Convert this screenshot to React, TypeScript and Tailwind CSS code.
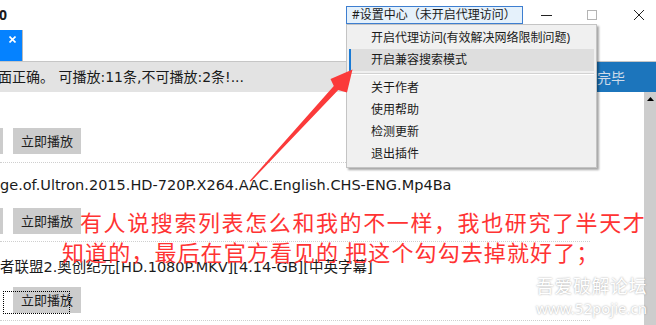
import React from "react";

const menuBottom = ["关于作者", "使用帮助", "检测更新", "退出插件"];

const PlayButton = () => (
  <button className="w-[68px] h-[26px] bg-[#cccccc] text-[13px] text-[#1e1e1e] leading-none">
    立即播放
  </button>
);

const ButtonRow = ({ stub = true, focused = false }: { stub?: boolean; focused?: boolean }) => (
  <div className="flex items-center h-[26px]">
    <div className={stub ? "w-[3px] h-[26px] bg-[#cccccc]" : "w-[3px] h-[26px]"} />
    <div className="relative ml-[10px]">
      <PlayButton />
      {focused && (
        <div className="absolute -left-[10px] top-[4px] w-[67px] h-[23px] border border-dotted border-black" />
      )}
    </div>
  </div>
);

const App = () => {
  return (
    <div className="relative w-[656px] h-[325px] overflow-hidden bg-white text-[#1a1a1a] font-['Noto_Sans','Noto_Sans_CJK_SC',sans-serif]">
      {/* title bar */}
      <div className="flex items-center h-[30px] pr-[12px]">
        <span className="-ml-[1px] text-[14px] font-bold leading-none">0</span>
        <div className="ml-auto w-[177px] h-[18px] border border-[#3d7ed0] bg-[#e5f1fb] flex items-center pl-[5px] text-[12px] leading-none">
          #设置中心（未开启代理访问）
        </div>
        <svg className="ml-[18px]" width="11" height="11" viewBox="0 0 11 11">
          <line x1="0" y1="5.5" x2="11" y2="5.5" stroke="#222" strokeWidth="1" />
        </svg>
        <svg className="ml-[35px]" width="10" height="10" viewBox="0 0 10 10">
          <rect x="0.5" y="0.5" width="9" height="9" fill="none" stroke="#b4b4b4" strokeWidth="1" />
        </svg>
        <svg className="ml-[37px]" width="10" height="10" viewBox="0 0 10 10">
          <path d="M0 0 L10 10 M10 0 L0 10" stroke="#222" strokeWidth="1" />
        </svg>
      </div>

      {/* tab strip */}
      <div className="h-[32px] border-b border-[#c6c6c6]">
        <div className="w-[23px] h-full bg-[#0582ff] border-r border-[#b9b9b9] flex justify-center pt-[6px] pl-[3px]">
          <svg width="7" height="7" viewBox="0 0 7 7">
            <path d="M0.5 0.5 L6.5 6.5 M6.5 0.5 L0.5 6.5" stroke="#fff" strokeWidth="1.6" />
          </svg>
        </div>
      </div>

      {/* status bar */}
      <div className="flex items-center h-[30px] bg-[#e3e3e3]">
        <span className="-ml-[2px] text-[14px] whitespace-nowrap font-['DejaVu_Sans','Noto_Sans_CJK_SC',sans-serif]">
          面正确。 可播放:11条,不可播放:2条!...
        </span>
        <div className="ml-auto w-[108px] h-full bg-[#1c75bc] flex items-center pl-[21px] text-[14px] text-[#cfdcea] whitespace-nowrap">
          加载完毕
        </div>
      </div>

      {/* list + scrollbar */}
      <div className="flex h-[233px]">
        <div className="flex-1 overflow-hidden">
          <div className="w-[590px] font-['DejaVu_Sans','Noto_Sans_CJK_SC',sans-serif]">
            <div className="pt-[36px] pb-[8px] border-b border-dotted border-[#cfcfcf]">
              <ButtonRow />
            </div>
            <div className="pt-[12px] pb-[7px] border-b border-dotted border-[#cfcfcf]">
              <div className="h-[20px] leading-[20px] text-[14.5px] whitespace-nowrap">
                ge.of.Ultron.2015.HD-720P.X264.AAC.English.CHS-ENG.Mp4Ba
              </div>
              <div className="mt-[13px]">
                <ButtonRow />
              </div>
            </div>
            <div className="pt-[18px] pb-[7px] border-b border-dotted border-[#cfcfcf]">
              <div className="h-[14px] leading-[14px] text-[14.5px] whitespace-nowrap">
                者联盟2.奥创纪元[HD.1080P.MKV][4.14-GB][中英字幕]
              </div>
              <div className="mt-[13px]">
                <ButtonRow stub={false} focused />
              </div>
            </div>
          </div>
        </div>
        <div className="w-[12px] bg-[#cdcdcd] flex justify-center pt-[5px]">
          <svg width="7" height="4" viewBox="0 0 7 4">
            <path d="M3.5 0 L7 4 L0 4 Z" fill="#000" />
          </svg>
        </div>
      </div>

      {/* dropdown menu */}
      <div className="absolute left-[346px] top-[24px] w-[251px] bg-[#f0f0f0] border border-[#c4c4c4] shadow-[2px_2px_2px_rgba(0,0,0,0.35)] pt-[2px] pb-[2px] text-[12px] text-[#1a1a1a]">
        <div className="h-[22px] flex items-center pl-[24px] whitespace-nowrap">开启代理访问(有效解决网络限制问题)</div>
        <div className="mx-[2px] h-[22px] flex items-center bg-[#dedede] border-l-2 border-[#1a7ad4] pl-[20px]">
          开启兼容搜索模式
        </div>
        <div className="mx-[2px] my-[2px] border-t border-[#d2d2d2] border-b border-b-white" />
        {menuBottom.map((t) => (
          <div key={t} className="h-[22px] flex items-center pl-[24px]">
            {t}
          </div>
        ))}
      </div>

      {/* red annotation */}
      <svg className="absolute inset-0 pointer-events-none" width="656" height="325" viewBox="0 0 656 325">
        <polygon
          points="249.5,181 333.8,85.9 330.5,79 352.5,69.5 347,92.5 338.2,90.1 250.8,181.6"
          fill="#fb3a3a"
        />
      </svg>
      <div className="absolute left-[62px] top-[210px] flex flex-col gap-[8px] text-[22px] leading-[22px] text-[#ff3333] whitespace-nowrap font-['Noto_Sans_CJK_SC',sans-serif]">
        <div className="pl-[18px] tracking-[1.6px]">有人说搜索列表怎么和我的不一样，我也研究了半天才</div>
        <div className="tracking-[1.1px]">知道的，最后在官方看见的 把这个勾勾去掉就好了；</div>
      </div>

      {/* watermark */}
      <div className="absolute right-[9px] top-[277px] text-right text-white leading-none [text-shadow:0_0_2px_rgba(0,0,0,0.4)] font-['Noto_Sans','Noto_Sans_CJK_SC',sans-serif]">
        <div className="text-[18px] tracking-[0.5px]">吾爱破解论坛</div>
        <div className="mt-[6px] text-[15px]">www.52pojie.cn</div>
      </div>
    </div>
  );
};

export default App;
